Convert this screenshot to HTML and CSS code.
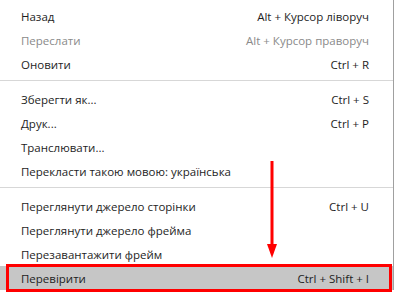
FILE: index.html
```html
<!DOCTYPE html>
<html>
<head>
<meta charset="utf-8">
<link rel="stylesheet" href="styles.css">
</head>
<body>
<div class="menu">
  <div class="group">
    <div class="item"><span>Назад</span><span>Alt + Курсор ліворуч</span></div>
    <div class="item disabled"><span>Переслати</span><span>Alt + Курсор праворуч</span></div>
    <div class="item"><span>Оновити</span><span>Ctrl + R</span></div>
  </div>
  <div class="sep"></div>
  <div class="group">
    <div class="item"><span>Зберегти як...</span><span>Ctrl + S</span></div>
    <div class="item"><span>Друк...</span><span>Ctrl + P</span></div>
    <div class="item"><span>Транслювати...</span><span></span></div>
    <div class="item"><span>Перекласти такою мовою: українська</span><span></span></div>
  </div>
  <div class="sep"></div>
  <div class="group">
    <div class="item"><span>Переглянути джерело сторінки</span><span>Ctrl + U</span></div>
    <div class="item"><span>Переглянути джерело фрейма</span><span></span></div>
    <div class="item"><span>Перезавантажити фрейм</span><span></span></div>
    <div class="item active"><span>Перевірити</span><span>Ctrl + Shift + I</span></div>
  </div>
  <svg class="arrow" width="14" height="100" viewBox="0 0 14 100">
    <rect x="5.5" y="0" width="3" height="86" fill="#ff0000"/>
    <polygon points="2,83 12,83 7,97" fill="#ff0000"/>
  </svg>
</div>
<div class="below">Останнє</div>
</body>
</html>
```
FILE: styles.css
```css
html, body {
  margin: 0;
  padding: 0;
  background: #ffffff;
  width: 396px;
  height: 295px;
  overflow: hidden;
}
.menu {
  position: relative;
  width: 393px;
  border-right: 1px solid #a0a0a0;
  background: #ffffff;
  font-family: "Open Sans", "Noto Sans", sans-serif;
  font-size: 11.5px;
  color: #1e1e1e;
  padding-top: 4px;
}
.item {
  display: flex;
  justify-content: space-between;
  align-items: center;
  height: 24px;
  padding: 0 24px 0 21px;
  white-space: nowrap;
}
.item.disabled {
  color: #8a8a8a;
}
.sep {
  height: 1px;
  background: #d7d7d7;
  margin: 4px 0 6px;
}
.item.active {
  position: relative;
  background: #c6c6c6;
}
.item.active::after {
  content: "";
  position: absolute;
  left: 6px;
  right: 1px;
  top: -2px;
  bottom: -2px;
  border: 3px solid #ff0000;
}
.arrow {
  position: absolute;
  left: 265px;
  top: 161px;
}
.below {
  font-family: "Open Sans", sans-serif;
  font-size: 13px;
  padding-left: 82px;
  margin-top: 0;
  color: #333;
}
```
